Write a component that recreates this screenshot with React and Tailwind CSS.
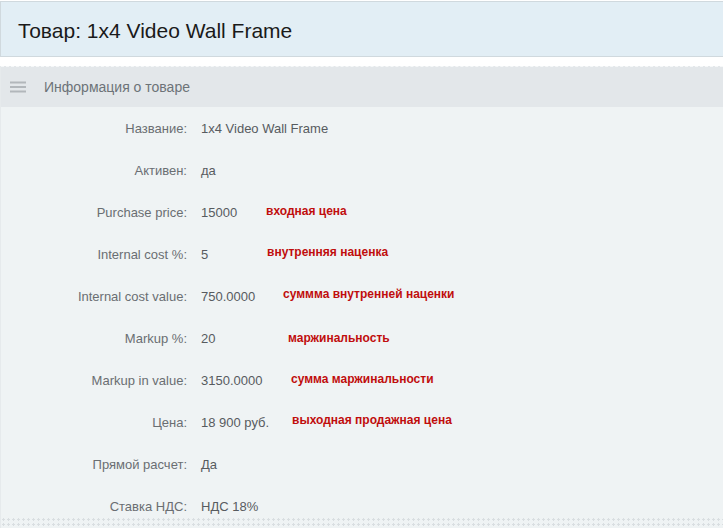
const rows = [
  { label: 'Название:', value: '1x4 Video Wall Frame' },
  { label: 'Активен:', value: 'да' },
  { label: 'Purchase price:', value: '15000', note: 'входная цена', x: 265, dy: -1 },
  { label: 'Internal cost %:', value: '5', note: 'внутренняя наценка', x: 266, dy: -2 },
  { label: 'Internal cost value:', value: '750.0000', note: 'суммма внутренней наценки', x: 282, dy: -2 },
  { label: 'Markup %:', value: '20', note: 'маржинальность', x: 287, dy: 0 },
  { label: 'Markup in value:', value: '3150.0000', note: 'сумма маржинальности', x: 290, dy: -1 },
  { label: 'Цена:', value: '18 900 руб.', note: 'выходная продажная цена', x: 291, dy: -2 },
  { label: 'Прямой расчет:', value: 'Да' },
  { label: 'Ставка НДС:', value: 'НДС 18%' },
];

const ListIcon = () => (
  <svg width="16" height="12" viewBox="0 0 16 12" className="shrink-0">
    <g stroke="#b2b7bb" strokeWidth="2">
      <line x1="0" y1="1.5" x2="16" y2="1.5" />
      <line x1="0" y1="6" x2="16" y2="6" />
      <line x1="0" y1="10.5" x2="16" y2="10.5" />
    </g>
  </svg>
);

export default function App() {
  return (
    <div className="w-[723px] h-[528px] overflow-hidden bg-white font-['Liberation_Sans',Arial,sans-serif]">
      <div className="mt-px h-[56px] bg-[#e2eef5] border-y border-l border-[#d0d9de] flex items-center pl-[17px]">
        <h1 className="text-[21px] text-[#1a1a1a] leading-none pt-[2px]">Товар: 1x4 Video Wall Frame</h1>
      </div>

      <div className="mt-[9px] border-l border-[#e6eaec]">
        <div className="h-[41px] bg-[#e3e7ea] border-t border-dashed border-[#f6f8f9] flex items-center pl-[9px] gap-[18px]">
          <ListIcon />
          <span className="text-[14px] text-[#6d7378]">Информация о товаре</span>
        </div>

        <div className="bg-[#eff3f4]">
          {rows.map((r, i) => (
            <div
              key={r.label}
              className={`relative flex items-start pt-[14px] text-[13px] leading-[16px] ${i === rows.length - 1 ? 'h-[32px]' : 'h-[42px]'}`}
            >
              <div className="w-[186px] text-right text-[#6a6e72]">{r.label}</div>
              <div className="ml-[14px] text-[#575b5f]">{r.value}</div>
              {r.note && (
                <span
                  className="absolute text-[12px] font-bold text-[#c00d0d]"
                  style={{ left: r.x, top: 13 + r.dy }}
                >
                  {r.note}
                </span>
              )}
            </div>
          ))}
          <div className="h-[12px] bg-[radial-gradient(#d9dee1_1px,transparent_1.2px)] bg-[length:5px_5px]" />
        </div>
      </div>
    </div>
  );
}
